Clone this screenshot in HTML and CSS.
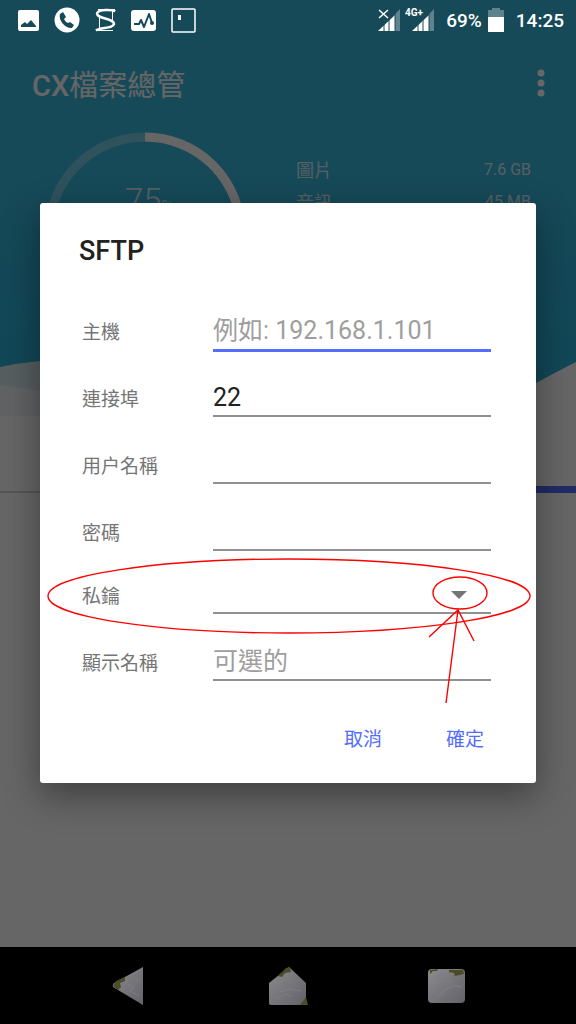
FILE: index.html
```
<!DOCTYPE html>
<html lang="zh-Hant">

<head>
    <meta charset="UTF-8">
    <meta name="viewport" content="width=device-width, initial-scale=1.0">
    <title>CX檔案總管</title>
    <link rel="stylesheet" href="styles.css">
</head>

<body>
    <div class="status_bar">
        <div class="status_icons">
            <svg width="21" height="21" viewBox="0 0 21 21">
                <rect width="21" height="21" rx="2" fill="#fff" />
                <path d="M3 17V15L7 12L9 14L13 10L18 16V17z" fill="#174a59" />
            </svg>
            <svg width="26" height="26" viewBox="0 0 26 26">
                <circle cx="13" cy="13" r="12.5" fill="#fff" />
                <path d="M6 7L9 5L12 10L10 12C11 14 12 15 14 16L16 15L20 18L18 21C12 22 4 14 6 7z" fill="#174a59" />
            </svg>
            <svg width="21" height="24" viewBox="0 0 21 24" fill="none" stroke="#fff">
                <path d="M3 1.500H20M1 22.500H18M4.500 9V22M17.500 2V14" />
                <path d="M20 3.500C18 1.500 3 1 2 5.500C2 11 19 10 19 16C18 21 5 19 1 22.500" stroke-width="2.500" />
            </svg>
            <svg width="25" height="21" viewBox="0 0 25 21">
                <rect width="25" height="21" rx="3" fill="#fff" />
                <path d="M3 14H8L10 10L13 17L18 4L21 13" fill="none" stroke="#174a59" stroke-width="2" stroke-linejoin="round" />
                <circle cx="21" cy="13" r="2" fill="#174a59" />
            </svg>
            <svg width="25" height="25" viewBox="0 0 25 25">
                <rect x="1" y="1" width="23" height="23" rx="1" fill="none" stroke="#fff" stroke-width="1.500" />
                <rect x="7" y="7" width="3" height="5" fill="#fff" />
            </svg>
        </div>
        <div class="status_info">
            <svg width="56" height="26" viewBox="0 0 56 26">
                <path d="M0 24L17 8V24z M34 24L51 8V24z" fill="#fff" />
                <path d="M17 24V7L22 2V24z M51 24V7L56 2V24z" fill="#5f838e" />
                <path d="M6 16V24M11 11V24M17 4V24M40 16V24M45 11V24M51 4V24" stroke="#174a59" />
                <path d="M1 3l9 8M10 3l-9 8" stroke="#fff" stroke-width="1.500" />
                <text class="network" x="27" y="9">4G+</text>
            </svg>
            <span class="battery_level">69%</span>
            <svg width="16" height="24" viewBox="0 0 16 24">
                <path d="M0 9V2H4V0H12V2H16V9z" fill="#5f838e" />
                <path d="M0 9H16V24H0z" fill="#fff" />
            </svg>
            <span class="clock">14:25</span>
        </div>
    </div>

    <main class="app">
        <header class="app_header">
            <div class="app_bar">
                <h1 class="app_title"><b>CX</b>檔案總管</h1>
                <button class="more_button" aria-label="更多">
                    <svg width="8" height="28" viewBox="0 0 8 28" fill="#fff">
                        <circle cx="4" cy="4" r="3.500" />
                        <circle cx="4" cy="14" r="3.500" />
                        <circle cx="4" cy="24" r="3.500" />
                    </svg>
                </button>
            </div>
            <div class="storage">
                <svg class="gauge" width="202" height="202" viewBox="0 0 202 202">
                    <circle class="gauge_track" cx="101" cy="101" r="96" />
                    <path class="gauge_value" d="M101 5A96 96 0 1 1 5 101" />
                    <text class="gauge_number" x="81" y="80">75<tspan class="gauge_unit">%</tspan></text>
                </svg>
                <dl class="storage_list">
                    <div class="storage_row"><dt>圖片</dt><dd>7.6 GB</dd></div>
                    <div class="storage_row"><dt>音訊</dt><dd>45 MB</dd></div>
                </dl>
            </div>
            <svg class="wave" viewBox="0 0 576 60" preserveAspectRatio="none">
                <path d="M0 11Q50 0 120 4T330 60H0z" fill="#d9eaf1" />
                <path d="M0 29Q60 36 150 58V60H0z" fill="#f0f5f8" />
                <path d="M440 60Q500 58 536 27Q560 14 576 6V60z" fill="#fff" />
            </svg>
        </header>
        <div class="tabs">
            <div class="tab"></div>
            <div class="tab tab_active"></div>
        </div>
    </main>

    <div class="scrim">
        <form class="dialog" role="dialog" aria-labelledby="dialog_title">
            <h2 class="dialog_title" id="dialog_title">SFTP</h2>
            <div class="field">
                <label for="host">主機</label>
                <input class="focused" id="host" type="text" placeholder="例如: 192.168.1.101">
            </div>
            <div class="field">
                <label for="port">連接埠</label>
                <input id="port" type="text" value="22">
            </div>
            <div class="field">
                <label for="user">用户名稱</label>
                <input id="user" type="text">
            </div>
            <div class="field">
                <label for="password">密碼</label>
                <input id="password" type="password">
            </div>
            <div class="field field_select">
                <label for="key">私鑰</label>
                <select id="key">
                    <option></option>
                </select>
                <svg class="arrow_down" width="16" height="8" viewBox="0 0 16 8">
                    <path d="M0 0H16L8 8z" fill="#757575" />
                </svg>
            </div>
            <div class="field">
                <label for="display_name">顯示名稱</label>
                <input id="display_name" type="text" placeholder="可選的">
            </div>
            <div class="dialog_buttons">
                <button type="button">取消</button>
                <button type="button">確定</button>
            </div>
            <!-- red pen marks around the key row -->
            <svg class="marks" width="484" height="148" viewBox="0 0 484 148">
                <ellipse cx="242" cy="39" rx="241" ry="37" />
                <ellipse cx="413" cy="36" rx="27" ry="16" />
                <path d="M399 146L411 53M382 80L411 53L427 84" />
            </svg>
        </form>
    </div>

    <nav class="nav_bar">
        <button aria-label="返回">
            <svg width="40" height="40" viewBox="0 0 40 40">
                <defs>
                    <linearGradient id="stone" x1="0" y1="0" x2="1" y2="1">
                        <stop offset="0" stop-color="#8c8b8f" />
                        <stop offset=".5" stop-color="#77767b" />
                        <stop offset="1" stop-color="#62626a" />
                    </linearGradient>
                </defs>
                <path d="M34 1V39L4 21Q3 19 5 17z" fill="url(#stone)" />
                <path d="M33 3L17 12M19 18L25 21L21 25L30 30M26 11L30 16" stroke="#7f7e83" fill="none" />
                <path d="M4 20L7 15L16 11V15L11 17L12 21L9 24z" fill="#4c4c28" />
            </svg>
        </button>
        <button aria-label="首頁">
            <svg width="40" height="40" viewBox="0 0 40 40">
                <path d="M1 17L21 1L38 17V37Q38 39 36 39H3Q1 39 1 37z" fill="url(#stone)" />
                <path d="M5 20L15 14L22 16M12 26L21 23L33 25M8 33L18 28L24 31" stroke="#7f7e83" fill="none" />
                <path d="M10 10L18 2L22 1L23 6L17 7L14 11z M32 39L36 34L38 31L40 39z" fill="#4c4c28" />
            </svg>
        </button>
        <button aria-label="最近">
            <svg width="40" height="40" viewBox="0 0 40 40">
                <rect x="1" y="3" width="37" height="34" rx="4" fill="url(#stone)" />
                <path d="M7 11L15 8L22 11M10 19L17 14L26 16M11 31L19 23L27 20L35 21" stroke="#7f7e83" fill="none" />
                <path d="M3 8V4L11 3L10 5H6z M22 4H36L37 8L28 10L27 7L22 6z" fill="#4c4b25" />
            </svg>
        </button>
    </nav>
</body>

</html>
```
FILE: styles.css
```
* {
    box-sizing: border-box;
}

body {
    margin: 0;
    min-height: 100vh;
    display: flex;
    flex-direction: column;
    background-color: white;
    font-family: Roboto, "Noto Sans CJK TC", sans-serif;
}

button {
    padding: 0;
    border: none;
    background: none;
    font-family: inherit;
}

svg {
    display: block;
}

.status_bar {
    position: relative;
    z-index: 2;
    height: 40px;
    padding: 0 12px 0 18px;
    display: flex;
    justify-content: space-between;
    align-items: center;
    background-color: #174a59;
    color: white;
}

.status_icons {
    display: flex;
    align-items: center;
    gap: 15px;
}

.status_info {
    display: flex;
    align-items: center;
    gap: 12px;
    font-size: 19px;
    font-weight: 500;
}

.battery_level {
    margin-right: -6px;
}

.network {
    fill: white;
    font-size: 10px;
    font-weight: 700;
}

.app {
    flex: 1;
}

.app_header {
    display: flex;
    flex-direction: column;
    height: 376px;
    background: linear-gradient(to bottom, #3ab9df 0%, #3ab9df 30%, #2ab0d8 100%);
    color: white;
}

.app_bar {
    display: flex;
    justify-content: space-between;
    align-items: center;
    height: 86px;
    padding: 0 31px 0 32px;
}

.app_title {
    margin: 0;
    font-size: 29px;
    font-weight: 400;
}

.app_title b {
    font-weight: 500;
}

.storage {
    flex: 1;
    display: flex;
    justify-content: space-between;
    padding: 6px 45px 0 44px;
}

.gauge {
    flex: none;
}

.gauge_track,
.gauge_value {
    fill: none;
    stroke: white;
    stroke-width: 9;
}

.gauge_track {
    opacity: 0.3;
}

.gauge_number {
    fill: white;
    font-size: 33px;
    font-weight: 300;
    opacity: 0.8;
}

.gauge_unit {
    font-size: 16px;
}

.storage_list {
    width: 235px;
    margin: 21px 0 0;
}

.storage_row {
    display: flex;
    justify-content: space-between;
    align-items: center;
    height: 32px;
    font-size: 18px;
    opacity: 0.8;
}

.storage_row dd {
    margin: 0;
    font-size: 16px;
}

.wave {
    flex: none;
    width: 100%;
    height: 60px;
}

.tabs {
    display: flex;
    height: 77px;
}

.tab {
    flex: 1;
    border-bottom: 2px solid #d5d5d5;
}

.tab_active {
    border-bottom: 7px solid #536dfe;
}

.scrim {
    position: absolute;
    top: 0;
    left: 0;
    right: 0;
    bottom: 0;
    z-index: 1;
    display: flex;
    align-items: center;
    justify-content: center;
    padding: 40px 40px 78px;
    background-color: rgba(0, 0, 0, 0.6);
}

.dialog {
    position: relative;
    width: 100%;
    padding: 24px 45px 22px 42px;
    border-radius: 3px;
    background-color: white;
    box-shadow: 0 12px 36px rgba(0, 0, 0, 0.4);
}

.dialog_title {
    margin: 0 -3px 27px;
    line-height: 48px;
    font-size: 27px;
    font-weight: 500;
    color: #212121;
}

.field {
    position: relative;
    display: flex;
    align-items: flex-end;
    height: 48px;
    margin-bottom: 19px;
}

.field_select {
    height: 44px;
}

.field label {
    width: 131px;
    flex: none;
    line-height: 34px;
    font-size: 19px;
    color: #757575;
}

.field input,
.field select {
    flex: 1;
    min-width: 0;
    height: 38px;
    padding: 0;
    border: none;
    border-bottom: 2px solid #919191;
    border-radius: 0;
    outline: none;
    background: none;
    appearance: none;
    font-family: inherit;
    font-size: 25px;
    color: #212121;
}

.field input::placeholder {
    color: #9e9e9e;
}

.field .focused {
    height: 40px;
    margin-bottom: -2px;
    border-bottom: 3px solid #536dfe;
}

.arrow_down {
    position: absolute;
    right: 24px;
    bottom: 15px;
    pointer-events: none;
}

.dialog_buttons {
    display: flex;
    justify-content: flex-end;
    gap: 38px;
    margin: 32px -6px 0 0;
}

.dialog_buttons button {
    min-width: 64px;
    height: 48px;
    font-size: 19px;
    color: #536dfe;
}

.marks {
    position: absolute;
    right: 5px;
    bottom: 78px;
    fill: none;
    stroke: #f00;
    stroke-width: 1.4;
    pointer-events: none;
}

.nav_bar {
    position: relative;
    z-index: 2;
    display: flex;
    justify-content: center;
    align-items: center;
    gap: 119px;
    height: 77px;
    background-color: black;
}
```
